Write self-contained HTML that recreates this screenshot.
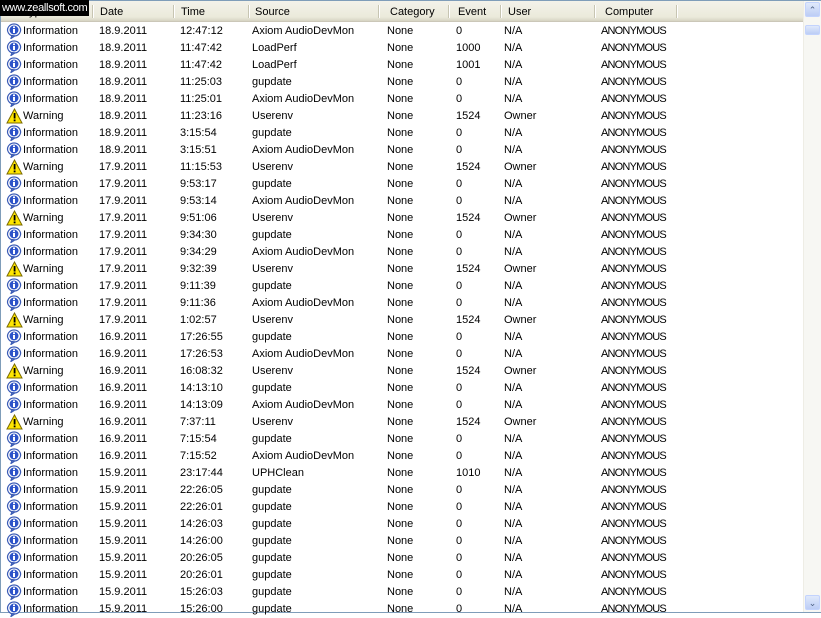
<!DOCTYPE html>
<html><head><meta charset="utf-8"><style>
body{margin:0;width:821px;height:613px;overflow:hidden;background:#fff;font-family:"Liberation Sans",sans-serif;font-size:11px;color:#000;position:relative}
#frame{position:absolute;left:0;top:0;width:819px;height:611px;border:1px solid #7f9db9}
#hdr{position:absolute;left:1px;top:1px;width:802px;height:20px;background:linear-gradient(#f3f2ea,#ebeadb 80%,#d6d3c2);border-bottom:1px solid #cbc7b8}
.h{position:absolute;top:5px}
.sep{position:absolute;top:4px;width:1px;height:13px;background:#c7c5b2;box-shadow:1px 0 #fff}
.r{position:absolute;left:1px;height:17px;width:802px}
.r span{position:absolute;top:2px;white-space:nowrap}
.c{letter-spacing:-0.8px}
#sb{position:absolute;left:803px;top:1px;width:17px;height:611px;background:#f7f7f3;border-left:1px solid #eeede5}
.btn{position:absolute;left:1px;width:15px;height:15px;border-radius:2px;background:linear-gradient(#e0e9fb,#bccdf5);border:1px solid #c3d3fd;box-sizing:border-box;color:#4d6185;font-size:9px;text-align:center;line-height:14px}
#logo{position:absolute;left:0;top:0;background:#000;color:#fff;font-size:11px;letter-spacing:-0.3px;padding:1px 2px;height:14px;line-height:14px}
</style></head><body>
<div id="frame"></div>
<div id="hdr">
<span class="h" style="left:22px">Type</span><span class="sep" style="left:91px"></span>
<span class="h" style="left:99px">Date</span><span class="sep" style="left:172px"></span>
<span class="h" style="left:180px">Time</span><span class="sep" style="left:247px"></span>
<span class="h" style="left:254px">Source</span><span class="sep" style="left:377px"></span>
<span class="h" style="left:389px">Category</span><span class="sep" style="left:447px"></span>
<span class="h" style="left:457px">Event</span><span class="sep" style="left:499px"></span>
<span class="h" style="left:507px">User</span><span class="sep" style="left:593px"></span>
<span class="h" style="left:604px">Computer</span><span class="sep" style="left:675px"></span>
</div>
<div id="rows"></div>
<div id="sb">
<div class="btn" style="top:1px">&#8963;</div>
<div class="btn" style="top:24px;height:10px;line-height:8px"></div>
<div class="btn" style="top:594px">&#8964;</div>
</div>
<div id="logo">www.zeallsoft.com</div>
<script>
var A="Axiom AudioDevMon";
var d=[
["I","18.9.2011","12:47:12",A,"0"],["I","18.9.2011","11:47:42","LoadPerf","1000"],["I","18.9.2011","11:47:42","LoadPerf","1001"],
["I","18.9.2011","11:25:03","gupdate","0"],["I","18.9.2011","11:25:01",A,"0"],["W","18.9.2011","11:23:16","Userenv","1524"],
["I","18.9.2011","3:15:54","gupdate","0"],["I","18.9.2011","3:15:51",A,"0"],["W","17.9.2011","11:15:53","Userenv","1524"],
["I","17.9.2011","9:53:17","gupdate","0"],["I","17.9.2011","9:53:14",A,"0"],["W","17.9.2011","9:51:06","Userenv","1524"],
["I","17.9.2011","9:34:30","gupdate","0"],["I","17.9.2011","9:34:29",A,"0"],["W","17.9.2011","9:32:39","Userenv","1524"],
["I","17.9.2011","9:11:39","gupdate","0"],["I","17.9.2011","9:11:36",A,"0"],["W","17.9.2011","1:02:57","Userenv","1524"],
["I","16.9.2011","17:26:55","gupdate","0"],["I","16.9.2011","17:26:53",A,"0"],["W","16.9.2011","16:08:32","Userenv","1524"],
["I","16.9.2011","14:13:10","gupdate","0"],["I","16.9.2011","14:13:09",A,"0"],["W","16.9.2011","7:37:11","Userenv","1524"],
["I","16.9.2011","7:15:54","gupdate","0"],["I","16.9.2011","7:15:52",A,"0"],["I","15.9.2011","23:17:44","UPHClean","1010"],
["I","15.9.2011","22:26:05","gupdate","0"],["I","15.9.2011","22:26:01","gupdate","0"],["I","15.9.2011","14:26:03","gupdate","0"],
["I","15.9.2011","14:26:00","gupdate","0"],["I","15.9.2011","20:26:05","gupdate","0"],["I","15.9.2011","20:26:01","gupdate","0"],
["I","15.9.2011","15:26:03","gupdate","0"],["I","15.9.2011","15:26:00","gupdate","0"]];
var info='<svg width="16" height="16" style="position:absolute;left:5px;top:0"><path d="M8 1a6.5 6 0 1 0 0.1 0zM6 12.5l-1 3 4-2.6z" fill="#fff" stroke="#3a5bb5" stroke-width="1.2"/><circle cx="8" cy="7" r="4.5" fill="#2c53c8"/><rect x="7" y="6" width="2" height="4" fill="#fff"/><rect x="7" y="3.5" width="2" height="1.6" fill="#fff"/></svg>';
var warn='<svg width="17" height="16" style="position:absolute;left:5px;top:0"><path d="M8.5 1L16 15H1z" fill="#ffe600" stroke="#7a6a00" stroke-width="1"/><rect x="7.7" y="5" width="1.8" height="5.5" fill="#000"/><rect x="7.7" y="11.5" width="1.8" height="1.8" fill="#000"/></svg>';
var h="";
d.forEach(function(r,i){var w=r[0]=="W";
h+='<div class="r" style="top:'+(23+i*17)+'px">'+(w?warn:info)+'<span style="left:22px">'+(w?"Warning":"Information")+'</span><span style="left:98px">'+r[1]+'</span><span style="left:179px">'+r[2]+'</span><span style="left:251px">'+r[3]+'</span><span style="left:386px">None</span><span style="left:455px">'+r[4]+'</span><span style="left:503px">'+(w?"Owner":"N/A")+'</span><span class="c" style="left:600px">ANONYMOUS</span></div>';});
document.getElementById("rows").innerHTML=h;
</script>
</body></html>
